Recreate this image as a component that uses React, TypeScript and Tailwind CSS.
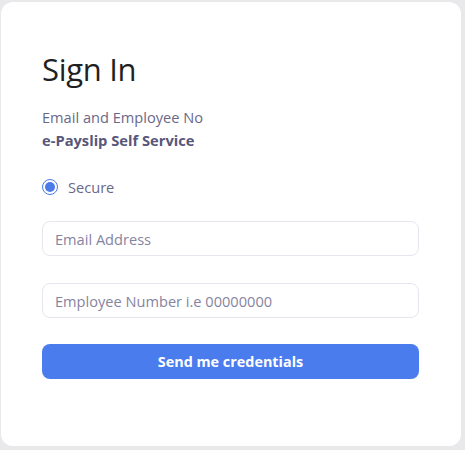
import React from 'react';

const App = () => {
  return (
    <div
      className="w-[465px] h-[450px] bg-[#e9e9ec] pt-[2px] pr-[4px] pb-[4px] pl-[1px]"
      style={{ fontFamily: '"Open Sans", "Noto Sans", sans-serif' }}
    >
      <div className="h-full bg-white rounded-[12px] pl-[41px] pr-[42px] pt-[47px]">
        <h1 className="text-[31px] leading-[40px] text-[#1f1f24] tracking-[-0.3px]">Sign In</h1>

        <p className="mt-[18px] text-[14.6px] leading-[20px] text-[#6a6888]">Email and Employee No</p>
        <p className="mt-[3px] text-[14.7px] leading-[20px] font-bold text-[#57577a]">e-Payslip Self Service</p>

        {/* radio */}
        <label className="mt-[27px] flex items-center gap-[10px]">
          <span className="w-[16px] h-[16px] rounded-full border border-[#4a7be8] flex items-center justify-center">
            <span className="w-[10px] h-[10px] rounded-full bg-[#4a7be8]" />
          </span>
          <span className="text-[14.6px] leading-[20px] text-[#6a6888]">Secure</span>
        </label>

        <div className="mt-[24px] flex flex-col gap-[27px]">
          <input
            type="text"
            placeholder="Email Address"
            className="h-[35px] w-full rounded-[8px] border border-[#e6e6ee] px-[12px] text-[14.6px] placeholder:text-[#8584a0] outline-none"
          />
          <input
            type="text"
            placeholder="Employee Number i.e 00000000"
            className="h-[35px] w-full rounded-[8px] border border-[#e6e6ee] px-[12px] text-[14.6px] placeholder:text-[#8584a0] outline-none"
          />
          <button className="-mt-[1px] h-[35px] w-full rounded-[8px] bg-[#4a7cee] text-white text-[14.4px] font-bold">
            Send me credentials
          </button>
        </div>
      </div>
    </div>
  );
};

export default App;
